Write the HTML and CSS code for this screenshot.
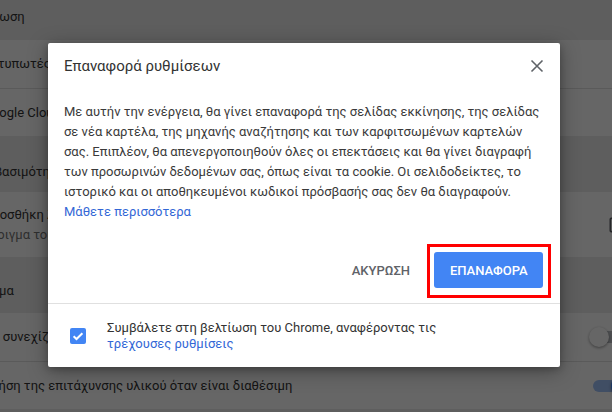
FILE: index.html
```html
<!DOCTYPE html>
<html lang="el">
<head>
<meta charset="utf-8">
<title>Επαναφορά ρυθμίσεων</title>
<link rel="stylesheet" href="styles.css">
</head>
<body>
<div class="page">
  <div class="sec-title sec-first">Εκτύπωση</div>
  <div class="card">
    <div class="row">Εκτυπωτές</div>
    <div class="row row-sep">Google Cloud Print</div>
  </div>
  <div class="sec-title sec-mid">Προσβασιμότητα</div>
  <div class="card">
    <div class="row row-two">
      <div class="two-text">
        <div>Προσθήκη λειτουργιών προσβασιμότητας</div>
        <div class="secondary">Άνοιγμα του Chrome Web Store</div>
      </div>
      <svg class="ext-icon" width="24" height="24" viewBox="0 0 24 24"><path d="M19 19H5V5h7V3H5a2 2 0 0 0-2 2v14a2 2 0 0 0 2 2h14c1.1 0 2-.9 2-2v-7h-2v7zM14 3v2h3.59l-9.830 9.83 1.41 1.41L19 6.41V10h2V3h-7z" fill="#5f6368"/></svg>
    </div>
  </div>
  <div class="sec-title sec-last">Σύστημα</div>
  <div class="card">
    <div class="row">
      <span>Να συνεχίζουν να εκτελούνται εφαρμογές παρασκηνίου όταν το Google Chrome είναι κλειστό</span>
      <span class="toggle"><span class="knob"></span></span>
    </div>
    <div class="row row-sep">
      <span>Χρήση της επιτάχυνσης υλικού όταν είναι διαθέσιμη</span>
      <span class="toggle toggle-on"><span class="knob"></span></span>
    </div>
  </div>
</div>

<div class="overlay"></div>

<div class="dialog" role="dialog">
  <div class="dlg-head">
    <div class="dlg-title">Επαναφορά ρυθμίσεων</div>
    <button class="close" aria-label="Κλείσιμο">
      <svg width="24" height="24" viewBox="0 0 24 24"><path d="M6.5 6.5 L17.5 17.5 M17.5 6.5 L6.5 17.5" stroke="#5f6368" stroke-width="1.6" fill="none"/></svg>
    </button>
  </div>
  <div class="dlg-body">Με αυτήν την ενέργεια, θα γίνει επαναφορά της σελίδας εκκίνησης, της σελίδας σε νέα καρτέλα, της μηχανής αναζήτησης και των καρφιτσωμένων καρτελών σας. Επιπλέον, θα απενεργοποιηθούν όλες οι επεκτάσεις και θα γίνει διαγραφή των προσωρινών δεδομένων σας, όπως είναι τα cookie. Οι σελιδοδείκτες, το ιστορικό και οι αποθηκευμένοι κωδικοί πρόσβασής σας δεν θα διαγραφούν.<br><a class="link" href="#">Μάθετε περισσότερα</a></div>
  <div class="dlg-actions">
    <button class="btn btn-cancel">ΑΚΥΡΩΣΗ</button>
    <span class="highlight"><button class="btn btn-primary">ΕΠΑΝΑΦΟΡΑ</button></span>
  </div>
  <div class="dlg-footer">
    <span class="checkbox">
      <svg width="16" height="16" viewBox="0 0 16 16"><path d="M3.6 8.2 L6.5 11 L12.4 5.2" stroke="#fff" stroke-width="2" fill="none"/></svg>
    </span>
    <div class="footer-text">Συμβάλετε στη βελτίωση του Chrome, αναφέροντας τις<br><a class="link" href="#">τρέχουσες ρυθμίσεις</a></div>
  </div>
</div>
</body>
</html>
```

FILE: styles.css
```css
* { box-sizing: border-box; }

html, body {
  margin: 0;
  padding: 0;
}

body {
  width: 612px;
  height: 412px;
  overflow: hidden;
  position: relative;
  font-family: Roboto, "Noto Sans", sans-serif;
  font-size: 13px;
  color: #333;
  background: #ebebeb;
}

.page {
  margin-left: -37px;
  width: 684px;
}

.sec-title {
  line-height: 20px;
  font-size: 13px;
  color: #333;
  white-space: nowrap;
}

.sec-first { height: 40px; padding-top: 7px; }
.sec-mid { height: 56px; padding-top: 26px; }
.sec-last { height: 56px; padding-top: 24px; }

.card {
  background: #fff;
  padding: 0 20px;
}

.row {
  height: 48px;
  display: flex;
  align-items: center;
  justify-content: space-between;
  white-space: nowrap;
  line-height: 20px;
}

.row-sep { border-top: 1px solid #e0e0e0; }

.row-two {
  height: 65px;
}

.secondary { color: #757575; }

.ext-icon { margin-right: 0; width: 20px; height: 20px; }

.toggle {
  position: relative;
  width: 34px;
  height: 12px;
  border-radius: 6px;
  background: #bdc1c6;
  flex: none;
  margin-left: 12px;
}

.toggle .knob {
  position: absolute;
  top: -4px;
  left: -4px;
  width: 20px;
  height: 20px;
  border-radius: 50%;
  background: #fff;
  box-shadow: 0 1px 3px rgba(0,0,0,0.4);
}

.toggle-on { background: #a0c2f9; }
.toggle-on .knob { left: auto; right: -4px; background: #4285f4; }

.overlay {
  position: absolute;
  inset: 0;
  background: rgba(0, 0, 0, 0.6);
}

.dialog {
  position: absolute;
  left: 48px;
  top: 43px;
  width: 512px;
  height: 324px;
  background: #fff;
  border-radius: 2px;
  box-shadow: 0 4px 20px rgba(0,0,0,0.35), 0 2px 6px rgba(0,0,0,0.2);
  display: flex;
  flex-direction: column;
}

.dlg-head {
  display: flex;
  align-items: center;
  justify-content: space-between;
  height: 34px;
  padding: 12px 11px 0 16px;
}

.dlg-title {
  font-size: 15px;
  line-height: 22px;
  color: #333;
}

.close {
  border: 0;
  background: none;
  padding: 0;
  width: 24px;
  height: 24px;
  display: flex;
}

.dlg-body {
  padding: 25px 16px 0 16px;
  line-height: 20px;
  font-size: 13px;
  color: #3a3a3a;
}

.link {
  color: #3367d6;
  text-decoration: none;
}

.dlg-actions {
  display: flex;
  justify-content: flex-end;
  align-items: center;
  gap: 8px;
  padding: 30px 17px 15px 16px;
}

.btn {
  font-family: Roboto, "Noto Sans", sans-serif;
  font-size: 13px;
  font-weight: 500;
  height: 36px;
  padding: 0 16px;
  border: 0;
  border-radius: 3px;
  background: none;
}

.btn-cancel { color: #5f6368; }

.btn-primary {
  background: #4285f4;
  color: #fff;
  width: 109px;
}

.highlight {
  position: relative;
  display: flex;
}

.highlight::after {
  content: "";
  position: absolute;
  left: -7px;
  right: -8px;
  top: -8px;
  bottom: -10px;
  border: 3px solid #f00;
}

.dlg-footer {
  flex: 1;
  border-top: 1px solid #e0e0e0;
  display: flex;
  align-items: center;
  padding: 0 16px 0 22px;
  gap: 21px;
}

.checkbox {
  width: 16px;
  height: 16px;
  border-radius: 2px;
  background: #4285f4;
  display: flex;
  flex: none;
}

.footer-text {
  line-height: 16px;
  color: #333;
}
```
